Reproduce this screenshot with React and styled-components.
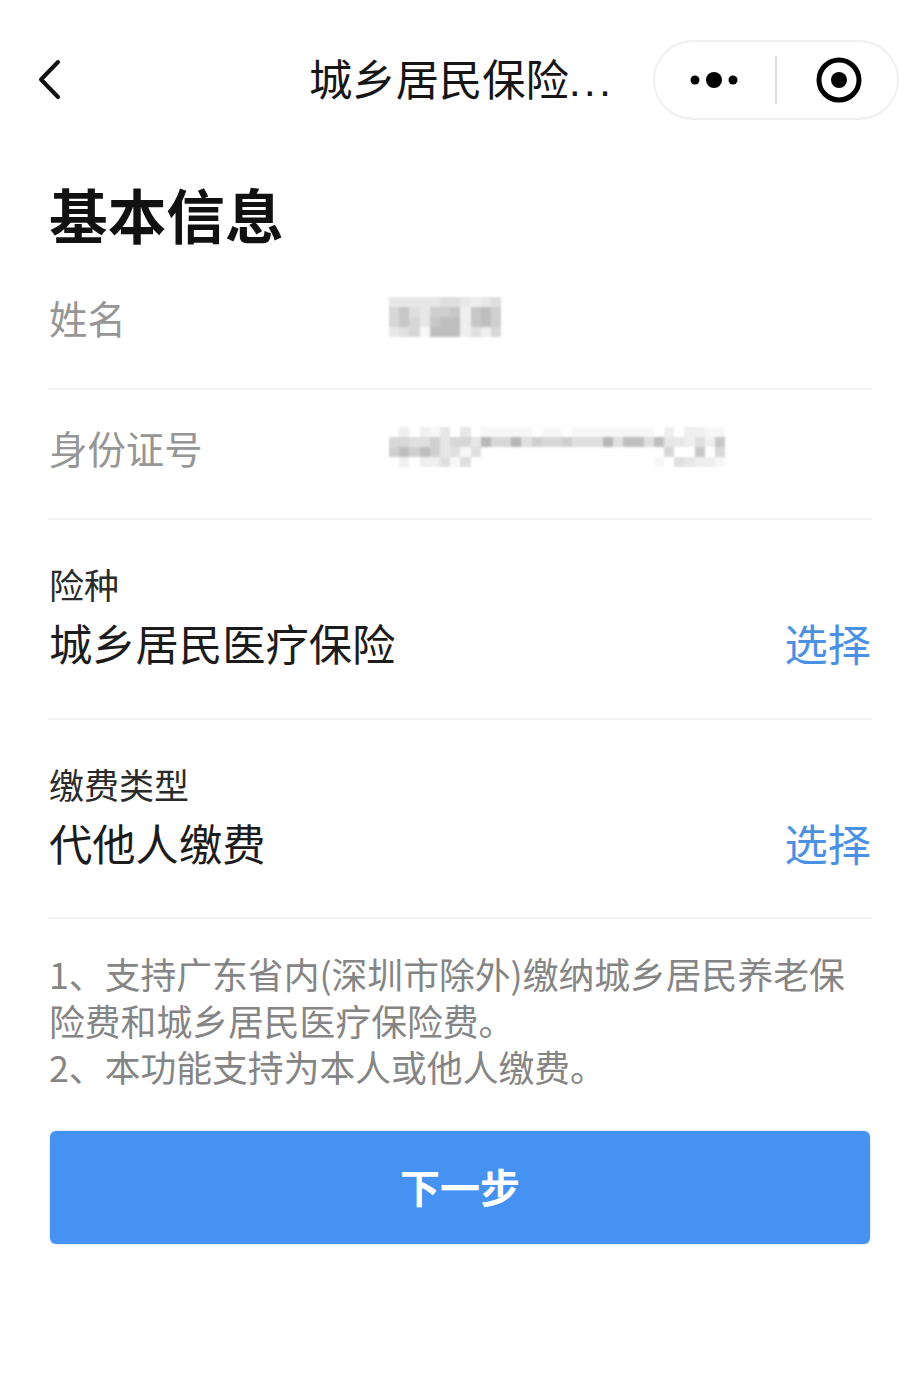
import styled, { createGlobalStyle } from 'styled-components';

const GlobalStyle = createGlobalStyle`
  html, body {
    margin: 0;
    padding: 0;
    background: #fff;
  }
  body {
    font-family: "Noto Sans CJK SC", "Noto Sans", sans-serif;
  }
`;

const Page = styled.div`
  width: 922px;
  height: 1387px;
  overflow: hidden;
  background: #fff;
`;

const Nav = styled.header`
  display: grid;
  grid-template-columns: 1fr auto 1fr;
  align-items: center;
  height: 80px;
  padding: 40px 23px 40px 24px;
`;

const BackIcon = styled.svg`
  display: block;
  width: 30px;
  height: 44px;
  margin-left: 13px;
`;

const NavTitle = styled.h1`
  margin: 0;
  padding-bottom: 2px;
  font-size: 43.3px;
  font-weight: 400;
  line-height: 60px;
  color: #161616;
  white-space: nowrap;
`;

const Dots = styled.span`
  font-family: "Liberation Sans", sans-serif;
  letter-spacing: 3px;
`;

const Capsule = styled.div`
  justify-self: end;
  box-sizing: border-box;
  display: flex;
  align-items: center;
  width: 246px;
  height: 80px;
  border: 2px solid #efefef;
  border-radius: 40px;
`;

const CapsuleButton = styled.div`
  box-sizing: border-box;
  flex: none;
  width: 120px;
  display: flex;
  align-items: center;
  justify-content: center;
  padding: ${(p) => (p.$side === 'right' ? '0 0 0 4px' : '0 2px 0 0')};
`;

const CapsuleDivider = styled.div`
  width: 2px;
  height: 48px;
  background: #dedede;
`;

const Content = styled.main`
  padding: 0 50px 0 48px;
`;

const Heading = styled.h2`
  margin: 0;
  padding-left: 1px;
  height: 100px;
  font-size: 58.7px;
  font-weight: 700;
  line-height: 108px;
  color: #111;
`;

const InfoRow = styled.div`
  box-sizing: border-box;
  display: flex;
  align-items: center;
  height: 130px;
  padding: 0 0 14px 1px;
  border-bottom: 2px solid #f3f3f3;
`;

const InfoLabel = styled.div`
  width: 340px;
  font-size: 38.4px;
  line-height: 50px;
  color: #969696;
`;

const Mosaic = styled.div`
  display: grid;
  grid-template-columns: repeat(${(p) => p.$cols}, 10.2px);
  grid-auto-rows: 10px;
  filter: blur(1px);
`;

const PickRow = styled.div`
  box-sizing: border-box;
  display: flex;
  align-items: flex-start;
  justify-content: space-between;
  height: 199.5px;
  padding: 41px 1px 0;
  border-bottom: 2px solid #f3f3f3;
`;

const PickLabel = styled.div`
  font-size: 35px;
  line-height: 46px;
  color: #2b2b2b;
`;

const PickValue = styled.div`
  margin-top: 5px;
  font-size: 43.3px;
  line-height: 60px;
  color: #1c1c1c;
`;

const PickAction = styled.a`
  margin-top: 51px;
  font-size: 43.3px;
  line-height: 60px;
  color: #4b91e2;
`;

const Notes = styled.p`
  margin: 0;
  padding: 31px 0 0 1px;
  font-size: 35.8px;
  line-height: 46.5px;
  color: #858585;
`;

const NextButton = styled.button`
  display: block;
  width: 820px;
  height: 113px;
  margin: 41px 0 0 2px;
  padding: 0 0 2px;
  border: 0;
  border-radius: 6px;
  background: #4592f3;
  box-shadow: 0 0 3px rgba(69, 146, 243, 0.35);
  font-family: inherit;
  font-size: 40px;
  font-weight: 700;
  color: #fff;
`;

// one hex digit per cell: 0 is white, higher is darker
const NAME_CELLS = [
  '33333443234',
  '57436672786',
  '57537882786',
  '34518882425',
];

const ID_CELLS = [
  '020213030111110110111111110202211',
  '554463553955946556444948848332427',
  '686863414000000000000000000500705',
  '020224140000000000000000001043221',
];

const cellColor = (digit) => {
  const grey = 255 - parseInt(digit, 16) * 8;
  return `rgb(${grey}, ${grey}, ${grey})`;
};

const PixelBlur = ({ rows }) => (
  <Mosaic $cols={rows[0].length}>
    {rows.flatMap((row, y) =>
      row.split('').map((digit, x) => (
        <div key={`${y}-${x}`} style={{ background: cellColor(digit) }} />
      ))
    )}
  </Mosaic>
);

const App = () => (
  <Page>
    <GlobalStyle />
    <Nav>
      <BackIcon viewBox="0 0 30 44" fill="none">
        <path d="M21 4 L4 21.5 L21 39" stroke="#111" strokeWidth="4" strokeLinecap="round" strokeLinejoin="round" />
      </BackIcon>
      <NavTitle>
        城乡居民保险<Dots>...</Dots>
      </NavTitle>
      <Capsule>
        <CapsuleButton $side="left">
          <svg width="60" height="20" viewBox="0 0 60 20">
            <circle cx="11" cy="10" r="4.5" fill="#000" />
            <circle cx="30" cy="10" r="8" fill="#000" />
            <circle cx="49" cy="10" r="4.5" fill="#000" />
          </svg>
        </CapsuleButton>
        <CapsuleDivider />
        <CapsuleButton $side="right">
          <svg width="48" height="48" viewBox="0 0 48 48">
            <circle cx="24" cy="24" r="20" fill="none" stroke="#000" strokeWidth="5" />
            <circle cx="24" cy="24" r="8" fill="#000" />
          </svg>
        </CapsuleButton>
      </Capsule>
    </Nav>
    <Content>
      <Heading>基本信息</Heading>
      <InfoRow>
        <InfoLabel>姓名</InfoLabel>
        <PixelBlur rows={NAME_CELLS} />
      </InfoRow>
      <InfoRow>
        <InfoLabel>身份证号</InfoLabel>
        <PixelBlur rows={ID_CELLS} />
      </InfoRow>
      <PickRow>
        <div>
          <PickLabel>险种</PickLabel>
          <PickValue>城乡居民医疗保险</PickValue>
        </div>
        <PickAction>选择</PickAction>
      </PickRow>
      <PickRow>
        <div>
          <PickLabel>缴费类型</PickLabel>
          <PickValue>代他人缴费</PickValue>
        </div>
        <PickAction>选择</PickAction>
      </PickRow>
      <Notes>
        1、支持广东省内(深圳市除外)缴纳城乡居民养老保险费和城乡居民医疗保险费。
        <br />
        2、本功能支持为本人或他人缴费。
      </Notes>
      <NextButton>下一步</NextButton>
    </Content>
  </Page>
);

export default App;
